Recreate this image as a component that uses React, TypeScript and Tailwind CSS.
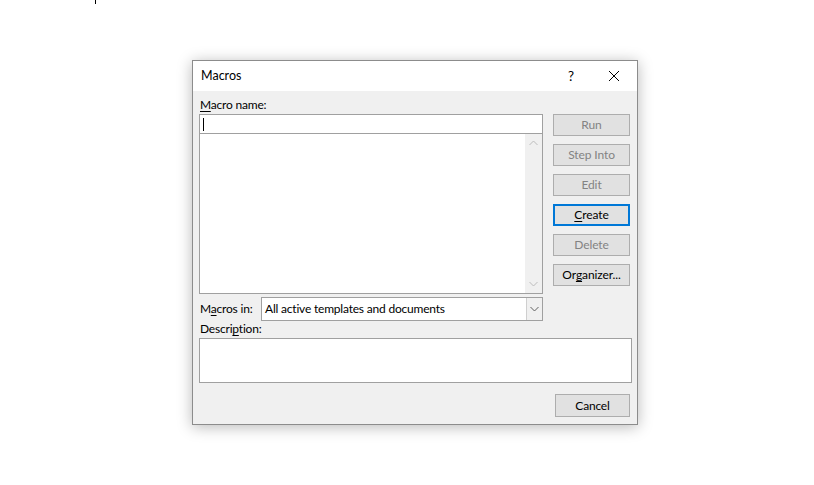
const FONT = "font-['Segoe_UI','Lato','Noto_Sans',sans-serif]";

function Chevron({ up = false, color = '#a0a0a0' }: { up?: boolean; color?: string }) {
  return (
    <svg width="9" height="6" viewBox="0 0 9 6" className="block">
      <path d={up ? 'M0.5 5 L4.5 1 L8.5 5' : 'M0.5 1 L4.5 5 L8.5 1'} fill="none" stroke={color} strokeWidth="1" />
    </svg>
  );
}

function SideButton({ label, disabled = false, focused = false }: { label: React.ReactNode; disabled?: boolean; focused?: boolean }) {
  return (
    <button
      className={`h-[22px] w-[77px] flex items-center justify-center bg-[#e1e1e1] text-[12px] tracking-[-0.1px] leading-none ${
        focused ? 'border-2 border-[#0078d7]' : 'border border-[#adadad]'
      } ${disabled ? 'text-[#838383]' : 'text-black'}`}
    >
      {label}
    </button>
  );
}

export default function App() {
  return (
    <div className={`w-[814px] h-[485px] bg-white relative ${FONT}`}>
      {/* stray text cursor at the top */}
      <div className="absolute left-[95px] top-0 w-px h-[4px] bg-black" />

      <div className="pt-[60px] pl-[192px]">
        <div className="w-[446px] h-[365px] border border-[#8c8c8c] bg-[#f0f0f0] shadow-[0_2px_14px_rgba(0,0,0,0.28)] flex flex-col">
          {/* title bar */}
          <div className="h-[30px] bg-white flex items-center pl-[8px] text-[12.5px] text-black">
            <span className="flex-1">Macros</span>
            <span className="w-[14px] text-[13.5px] mr-[30px] text-center">?</span>
            <svg width="12" height="12" viewBox="0 0 12 12" className="mr-[17px]">
              <path d="M1 1 L11 11 M11 1 L1 11" stroke="#000" strokeWidth="1" />
            </svg>
          </div>

          {/* body */}
          <div className="flex-1 px-[6px] pt-[6px] text-[12px] tracking-[-0.2px] text-black flex flex-col">
            <div className="flex gap-[10px]">
              <div className="w-[344px] flex flex-col">
                <div className="h-[17px] leading-[15px] pl-[1px]">
                  <span className="underline underline-offset-2">M</span>acro name:
                </div>
                <div className="h-[20px] border border-[#a0a0a0] bg-white flex items-center pl-[3px]">
                  <div className="w-px h-[13px] bg-black" />
                </div>
                <div className="h-[160px] border border-[#a0a0a0] border-t-0 bg-white flex">
                  <div className="flex-1" />
                  <div className="w-[17px] bg-[#f0f0f0] flex flex-col items-center justify-between py-[6px]">
                    <Chevron up color="#bcbcbc" />
                    <Chevron color="#bcbcbc" />
                  </div>
                </div>
              </div>

              <div className="w-[77px] flex flex-col gap-[8px] pt-[17px]">
                <SideButton label="Run" disabled />
                <SideButton label="Step Into" disabled />
                <SideButton label="Edit" disabled />
                <SideButton label={<><span className="underline underline-offset-2">C</span>reate</>} focused />
                <SideButton label="Delete" disabled />
                <SideButton label={<>Or<span className="underline underline-offset-2">g</span>anizer...</>} />
              </div>
            </div>

            <div className="flex items-center mt-[3px] w-[344px]">
              <span className="w-[62px] pl-[1px]">
                M<span className="underline underline-offset-2">a</span>cros in:
              </span>
              <div className="flex-1 h-[24px] border border-[#a0a0a0] bg-white flex items-center">
                <span className="flex-1 pl-[3px]">All active templates and documents</span>
                <div className="w-[16px] h-full border-l border-[#cfcfcf] bg-[#f0f0f0] flex items-center justify-center">
                  <Chevron color="#606060" />
                </div>
              </div>
            </div>

            <div className="h-[17px] leading-[15px] pl-[1px]">
              Descri<span className="underline underline-offset-2">p</span>tion:
            </div>
            <div className="w-[433px] h-[45px] border border-[#a0a0a0] bg-white" />

            <div className="flex justify-end mt-[11px] pr-[1px]">
              <button className="h-[23px] w-[75px] border border-[#adadad] bg-[#e1e1e1] text-[12px] text-black flex items-center justify-center">
                Cancel
              </button>
            </div>
          </div>
        </div>
      </div>
    </div>
  );
}
